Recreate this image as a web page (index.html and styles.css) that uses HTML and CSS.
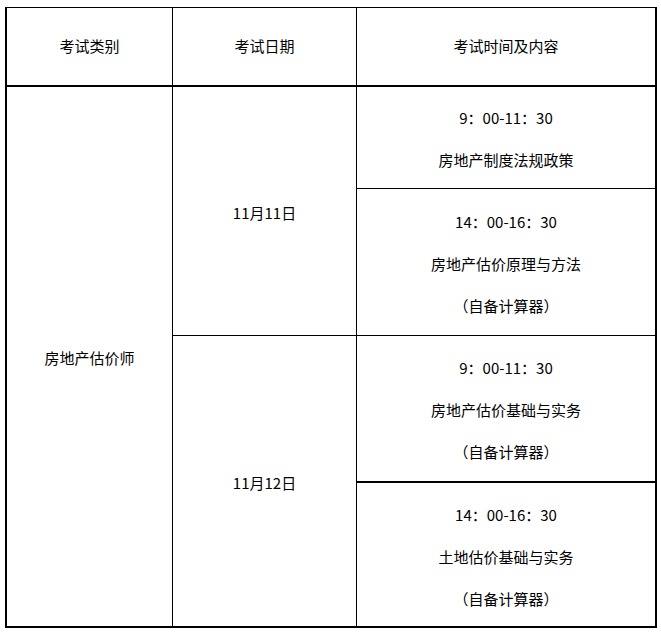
FILE: index.html
```html
<!DOCTYPE html>
<html lang="zh-CN">
<head>
<meta charset="utf-8">
<title>考试安排</title>
<link rel="stylesheet" href="styles.css">
</head>
<body>
<div class="schedule">
  <div class="cell head c1">考试类别</div>
  <div class="cell head c2">考试日期</div>
  <div class="cell head c3">考试时间及内容</div>

  <div class="cell c1 category">房地产估价师</div>
  <div class="cell c2 day1">11月11日</div>
  <div class="cell c3 r1">
    <div class="line">9：00-11：30</div>
    <div class="line">房地产制度法规政策</div>
  </div>
  <div class="cell c3 r2">
    <div class="line">14：00-16：30</div>
    <div class="line">房地产估价原理与方法</div>
    <div class="line">（自备计算器）</div>
  </div>

  <div class="cell c2 day2">11月12日</div>
  <div class="cell c3 r3">
    <div class="line">9：00-11：30</div>
    <div class="line">房地产估价基础与实务</div>
    <div class="line">（自备计算器）</div>
  </div>
  <div class="cell c3 r4">
    <div class="line">14：00-16：30</div>
    <div class="line">土地估价基础与实务</div>
    <div class="line">（自备计算器）</div>
  </div>
</div>
</body>
</html>
```

FILE: styles.css
```css
html, body {
  margin: 0;
  padding: 0;
  background: #ffffff;
}

body {
  font-family: "Noto Sans CJK SC", "Liberation Sans", sans-serif;
  font-size: 15px;
  color: #000000;
}

.schedule {
  box-sizing: border-box;
  width: 652px;
  height: 621px;
  margin: 7px 0 0 5px;
  border-top: 1px solid #000;
  border-left: 2px solid #000;
  border-right: 2px solid #000;
  border-bottom: 2px solid #000;
  display: grid;
  grid-template-columns: 166px 184px 298px;
  grid-template-rows: 79px 102px 147px 147px 143px;
}

.cell {
  box-sizing: border-box;
  display: flex;
  flex-direction: column;
  align-items: center;
  justify-content: center;
  text-align: center;
  line-height: 42px;
  white-space: nowrap;
}

.c1 { grid-column: 1; border-right: 1px solid #000; }
.c2 { grid-column: 2; border-right: 1px solid #000; }
.c3 { grid-column: 3; }

.head {
  grid-row: 1;
  border-bottom: 2px solid #000;
  padding-bottom: 2px;
}

.category { grid-row: 2 / 6; padding-top: 3px; }
.day1 { grid-row: 2 / 4; border-bottom: 1px solid #000; padding-top: 3px; }
.day2 { grid-row: 4 / 6; padding-top: 3px; }

.r1 { grid-row: 2; border-bottom: 1px solid #000; padding-top: 3px; }
.r2 { grid-row: 3; border-bottom: 1px solid #000; padding-top: 3px; }
.r3 { grid-row: 4; border-bottom: 2px solid #000; padding-top: 3px; }
.r4 { grid-row: 5; padding-top: 5px; }

.line {
  height: 42px;
}
```
